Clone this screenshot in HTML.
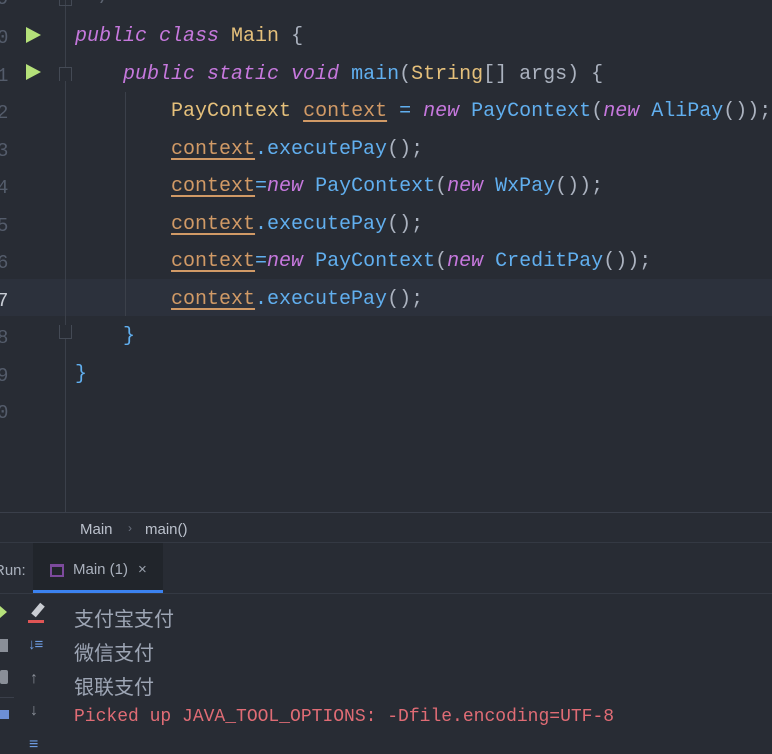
<!DOCTYPE html>
<html><head><meta charset="utf-8"><style>
*{margin:0;padding:0;box-sizing:border-box}
body{width:772px;height:752px;overflow:hidden;background:#282c34;position:relative;font-family:"Liberation Mono",monospace}
.ln{position:absolute;left:-3px;font-size:19px;color:#545c6b;font-family:"Liberation Mono",monospace}
.code{position:absolute;left:75px;font-size:20px;white-space:pre;color:#abb2bf;letter-spacing:0}
.k{color:#c678dd;font-style:italic}
.y{color:#e5c07b}
.b{color:#61afef}
.p{color:#abb2bf}
.u{color:#d19a66;text-decoration:underline;text-decoration-color:#d19a66;text-underline-offset:4px}
.run{position:absolute;left:26px;width:0;height:0;border-top:8px solid transparent;border-bottom:8px solid transparent;border-left:15px solid #b5e17a}
.guide{position:absolute;width:1px;background:#3b404a}
.ui{font-family:"Liberation Sans",sans-serif;position:absolute}
.cjk{font-family:"Liberation Sans","Noto Sans CJK SC",sans-serif;color:#9da5b4;font-size:20px;position:absolute;left:74px}
</style></head><body>
<div style="position:absolute;left:0;top:279px;width:772px;height:37px;background:#2c313c"></div>
<div class="guide" style="left:65px;top:0;height:512px"></div>
<div class="guide" style="left:125px;top:92px;height:224px"></div>
<div style="position:absolute;left:59px;top:0;width:13px;height:6px;border:1.5px solid #444a55;border-top:none"></div>
<div style="position:absolute;left:59px;top:67px;width:13px;height:14px;border:1.5px solid #444a55;border-bottom:none;background:#282c34"></div>
<div style="position:absolute;left:59px;top:325px;width:13px;height:14px;border:1.5px solid #444a55;border-top:none;background:#282c34"></div>

<div class="ln" style="top:-12px">9</div>
<div class="ln" style="top:27px">0</div>
<div class="ln" style="top:65px">1</div>
<div class="ln" style="top:102px">2</div>
<div class="ln" style="top:140px">3</div>
<div class="ln" style="top:177px">4</div>
<div class="ln" style="top:215px">5</div>
<div class="ln" style="top:252px">6</div>
<div class="ln" style="top:290px;color:#c8ccd4">7</div>
<div class="ln" style="top:327px">8</div>
<div class="ln" style="top:365px">9</div>
<div class="ln" style="top:402px">0</div>
<div class="run" style="top:27px"></div>
<div class="run" style="top:64px"></div>

<div class="code" style="top:-13px;left:87px;color:#5c6370">*/</div>
<div class="code" style="top:25px"><span class="k">public class</span> <span class="y">Main</span> <span class="p">{</span></div>
<div class="code" style="top:63px">    <span class="k">public static void</span> <span class="b">main</span>(<span class="y">String</span>[] args) {</div>
<div class="code" style="top:100px">        <span class="y">PayContext</span> <span class="u">context</span> <span class="b">=</span> <span class="k">new</span> <span class="b">PayContext</span>(<span class="k">new</span> <span class="b">AliPay</span>());</div>
<div class="code" style="top:138px">        <span class="u">context</span><span class="b">.executePay</span>();</div>
<div class="code" style="top:175px">        <span class="u">context</span><span class="b">=</span><span class="k">new</span> <span class="b">PayContext</span>(<span class="k">new</span> <span class="b">WxPay</span>());</div>
<div class="code" style="top:213px">        <span class="u">context</span><span class="b">.executePay</span>();</div>
<div class="code" style="top:250px">        <span class="u">context</span><span class="b">=</span><span class="k">new</span> <span class="b">PayContext</span>(<span class="k">new</span> <span class="b">CreditPay</span>());</div>
<div class="code" style="top:288px">        <span class="u">context</span><span class="b">.executePay</span>();</div>
<div class="code" style="top:325px">    <span class="b">}</span></div>
<div class="code" style="top:363px"><span class="b">}</span></div>

<div style="position:absolute;left:0;top:512px;width:772px;height:1px;background:#3a3f4a"></div>
<div class="ui" style="left:80px;top:521px;font-size:15px;color:#bbc1cc">Main</div>
<div class="ui" style="left:128px;top:521px;font-size:12px;color:#6b7280">›</div>
<div class="ui" style="left:145px;top:521px;font-size:15px;color:#bbc1cc">main()</div>
<div style="position:absolute;left:0;top:542px;width:772px;height:1px;background:#343943"></div>

<div style="position:absolute;left:33px;top:543px;width:130px;height:51px;background:#21252b"></div>
<div style="position:absolute;left:33px;top:590px;width:130px;height:4px;background:#3b82f0"></div>
<div style="position:absolute;left:0;top:593px;width:772px;height:1px;background:#343943"></div>
<div class="ui" style="left:-6px;top:562px;font-size:15px;color:#aab1bd">Run:</div>
<div style="position:absolute;left:50px;top:564px;width:14px;height:13px;border:2px solid #7c4a9c;border-top-width:3px"></div>
<div class="ui" style="left:73px;top:561px;font-size:15px;color:#aab1bd">Main (1)</div>
<div class="ui" style="left:138px;top:561px;font-size:15px;color:#9aa1ad">×</div>

<div style="position:absolute;left:0;top:606px;width:0;height:0;border-top:6px solid transparent;border-bottom:6px solid transparent;border-left:7px solid #b5e17a"></div>
<div style="position:absolute;left:0;top:639px;width:8px;height:13px;background:#8a8f98"></div>
<div style="position:absolute;left:0;top:670px;width:8px;height:14px;background:#8a8f98;border-radius:2px"></div>
<div style="position:absolute;left:0;top:710px;width:9px;height:9px;background:#6d8fd4"></div>
<div style="position:absolute;left:0;top:697px;width:14px;height:1px;background:#3a3f4a"></div>

<div style="position:absolute;left:28px;top:620px;width:16px;height:3px;background:#e05555"></div>
<div style="position:absolute;left:35px;top:603px;width:6px;height:14px;background:#c9ccd2;transform:rotate(40deg)"></div>
<div class="ui" style="left:28px;top:636px;font-size:15px;color:#6d9be0;letter-spacing:-1px">↓≡</div>
<div class="ui" style="left:30px;top:670px;font-size:16px;color:#8a8f98">↑</div>
<div class="ui" style="left:30px;top:702px;font-size:16px;color:#8a8f98">↓</div>
<div class="ui" style="left:29px;top:736px;font-size:16px;color:#6d9be0">≡</div>

<div class="cjk" style="top:603px">支付宝支付</div>
<div class="cjk" style="top:637px">微信支付</div>
<div class="cjk" style="top:671px">银联支付</div>
<div style="position:absolute;left:74px;top:707px;font-size:18px;color:#e06c75;white-space:pre">Picked up JAVA_TOOL_OPTIONS: -Dfile.encoding=UTF-8</div>
</body></html>
